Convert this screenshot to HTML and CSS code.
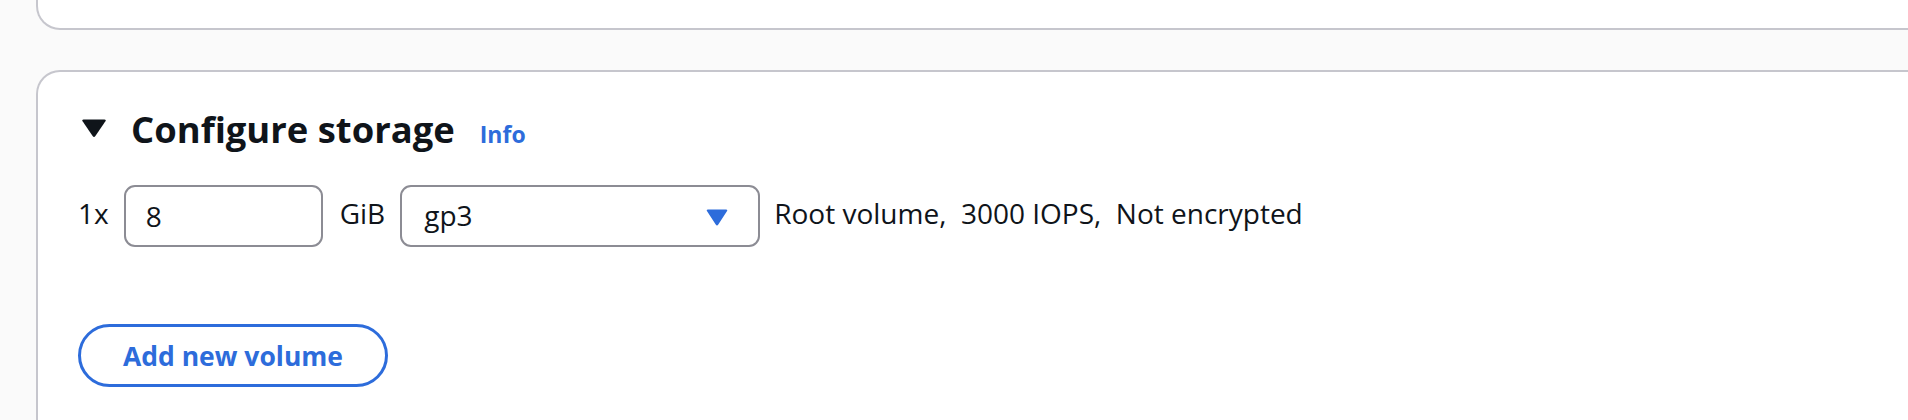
FILE: index.html
```html
<!DOCTYPE html>
<html lang="en">
<head>
<meta charset="utf-8">
<title>Configure storage</title>
<link rel="stylesheet" href="styles.css">
</head>
<body>
<div class="page">
  <div class="card card-prev"></div>
  <section class="card card-storage">
    <div class="header">
      <span class="caret">
        <svg width="32" height="20" viewBox="0 0 32 20" aria-hidden="true">
          <path d="M5.5 1.5 H26.5 Q28.5 1.5 27.4 3.2 L17.4 18 Q16 20 14.6 18 L4.6 3.2 Q3.5 1.5 5.5 1.5 Z" fill="#0f141a"/>
        </svg>
      </span>
      <div class="title">
        <h2 class="heading">Configure storage</h2>
        <a class="info" href="#">Info</a>
      </div>
    </div>
    <div class="volume-row">
      <span class="label">1x</span>
      <div class="input">8</div>
      <span class="label unit">GiB</span>
      <div class="select">
        <span class="select-value">gp3</span>
        <svg class="select-caret" width="22" height="17" viewBox="0 0 22 17" aria-hidden="true">
          <path d="M2 0.5 H20 Q22 0.5 20.9 2.2 L12.3 15.6 Q11 17.4 9.7 15.6 L1.1 2.2 Q0 0.5 2 0.5 Z" fill="#2d6cdb"/>
        </svg>
      </div>
      <span class="label desc">Root volume,  3000 IOPS,  Not encrypted</span>
    </div>
    <div class="actions">
      <button class="btn" type="button">Add new volume</button>
    </div>
  </section>
</div>
</body>
</html>
```
FILE: styles.css
```css
html, body {
  margin: 0;
  padding: 0;
  background: #fafafa;
  height: 420px;
  overflow: hidden;
}

.page {
  height: 420px;
  overflow: hidden;
  padding-left: 36px;
  font-family: "Open Sans", "Noto Sans", sans-serif;
  color: #0f141a;
}

.card {
  box-sizing: border-box;
  background: #ffffff;
  border: 2px solid #c6c6cd;
  border-radius: 24px;
  margin-right: -60px;
}

.card-prev {
  height: 30px;
  border-top: none;
  border-top-left-radius: 0;
  border-top-right-radius: 0;
}

.card-storage {
  margin-top: 40px;
  height: 350px;
  border-bottom: none;
  border-bottom-left-radius: 0;
  border-bottom-right-radius: 0;
  padding: 35px 40px 0 40px;
}

.header {
  display: flex;
  align-items: center;
}

.caret {
  display: flex;
  width: 32px;
  margin-top: -2px;
  margin-right: 21px;
}

.title {
  display: flex;
  align-items: baseline;
}

.heading {
  margin: 0;
  font-size: 36.4px;
  line-height: 44px;
  font-weight: 700;
}

.info {
  margin-left: 25px;
  font-size: 23px;
  font-weight: 700;
  color: #2d6cdb;
  text-decoration: none;
}

.volume-row {
  display: flex;
  align-items: center;
  gap: 15px;
  margin-top: 34px;
  font-size: 28px;
}

.label {
  line-height: 36px;
  margin-top: -7px;
}

.unit {
  margin-left: 2px;
}

.desc {
  white-space: pre;
  margin-left: -1px;
}

.input, .select {
  box-sizing: border-box;
  height: 62px;
  border: 2px solid #8c8c94;
  border-radius: 11px;
  background: #ffffff;
  display: flex;
  align-items: center;
  line-height: 36px;
}

.input {
  width: 199px;
  padding-left: 20px;
}

.select {
  width: 360px;
  padding: 0 30px 0 22px;
  justify-content: space-between;
}

.select-value {
  margin-top: -2px;
}

.select-caret {
  display: block;
  margin-top: 2px;
}

.actions {
  margin-top: 77px;
}

.btn {
  box-sizing: border-box;
  height: 63px;
  padding: 0 42px;
  border: 3px solid #2d6cdb;
  border-radius: 32px;
  background: #ffffff;
  color: #2d6cdb;
  font-family: "Open Sans", "Noto Sans", sans-serif;
  font-size: 26.5px;
  font-weight: 700;
  line-height: 36px;
  cursor: pointer;
}
```
